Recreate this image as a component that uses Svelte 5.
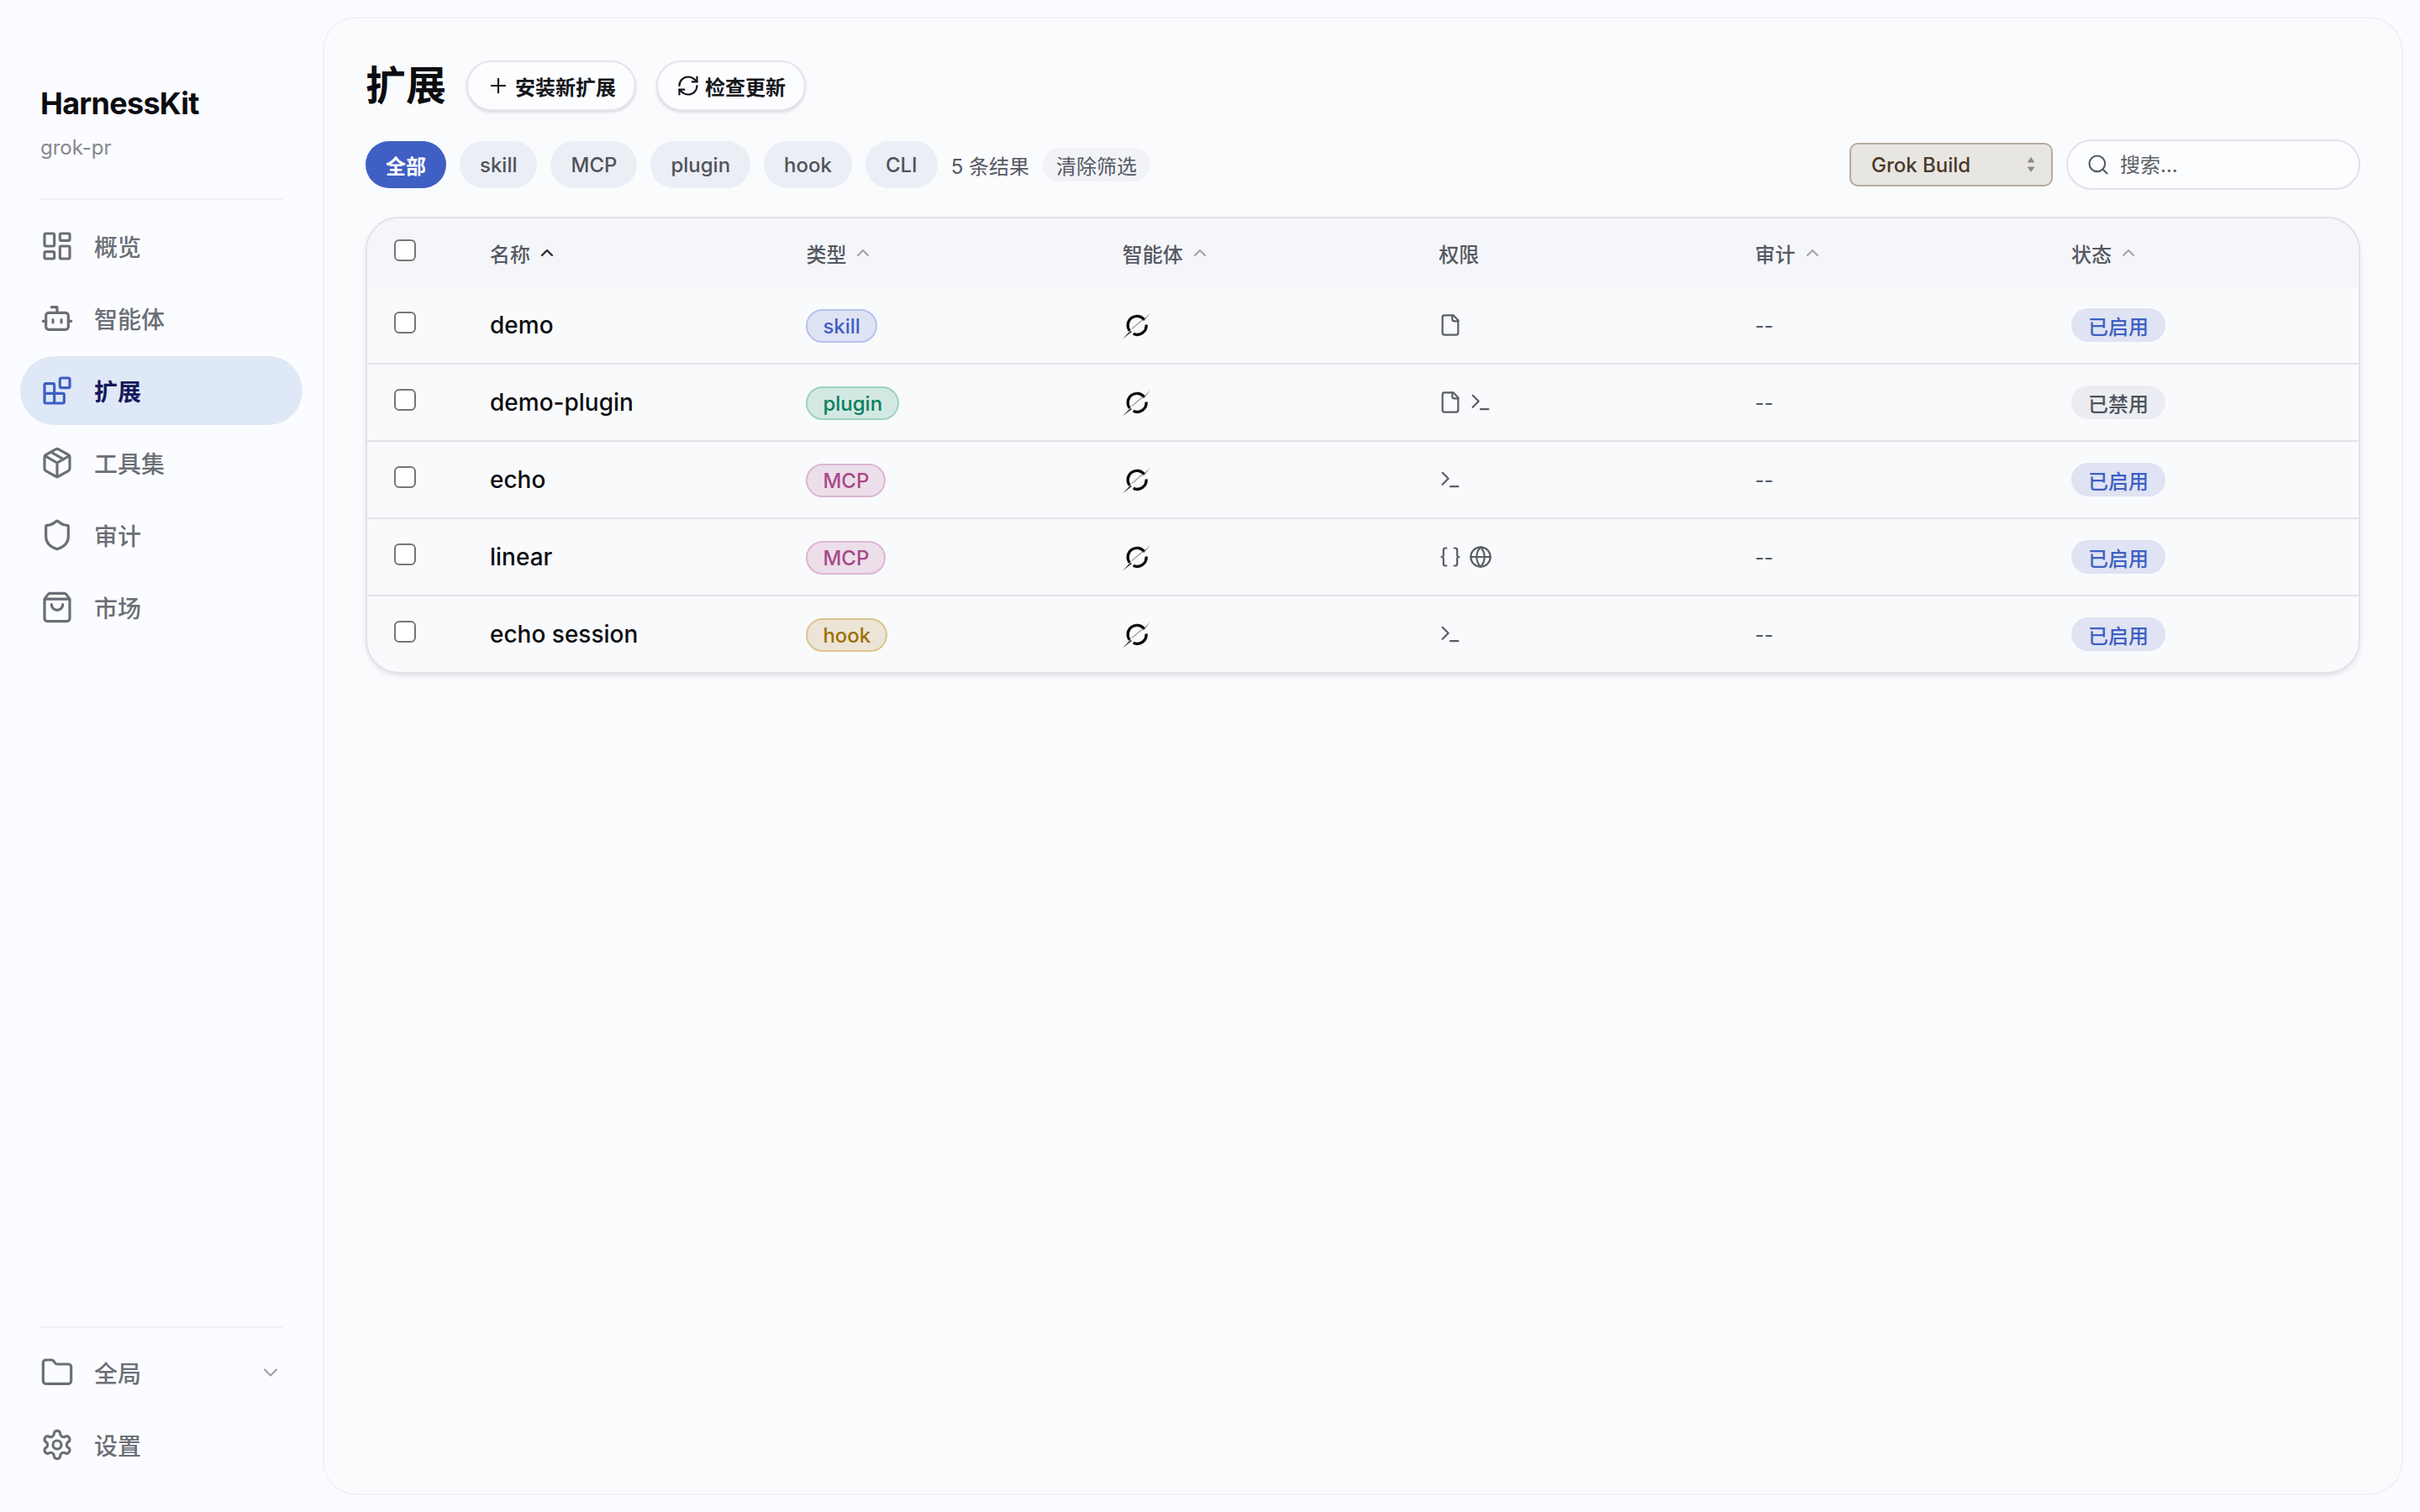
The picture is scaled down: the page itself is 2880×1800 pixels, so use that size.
<script>
  const icons = {
    dash: '<rect width="7" height="9" x="3" y="3" rx="1"/><rect width="7" height="5" x="14" y="3" rx="1"/><rect width="7" height="9" x="14" y="12" rx="1"/><rect width="7" height="5" x="3" y="16" rx="1"/>',
    bot: '<path d="M12 8V4H8"/><rect width="16" height="12" x="4" y="8" rx="2"/><path d="M2 14h2"/><path d="M20 14h2"/><path d="M15 13v2"/><path d="M9 13v2"/>',
    blocks: '<rect width="7" height="7" x="14" y="3" rx="1"/><path d="M10 21V8a1 1 0 0 0-1-1H4a1 1 0 0 0-1 1v12a1 1 0 0 0 1 1h12a1 1 0 0 0 1-1v-5a1 1 0 0 0-1-1H3"/>',
    pkg: '<path d="M11 21.73a2 2 0 0 0 2 0l7-4A2 2 0 0 0 21 16V8a2 2 0 0 0-1-1.73l-7-4a2 2 0 0 0-2 0l-7 4A2 2 0 0 0 3 8v8a2 2 0 0 0 1 1.73z"/><path d="M12 22V12"/><polyline points="3.29 7 12 12 20.71 7"/><path d="m7.5 4.27 9 5.15"/>',
    shield: '<path d="M20 13c0 5-3.5 7.5-7.66 8.95a1 1 0 0 1-.67-.01C7.5 20.5 4 18 4 13V6a1 1 0 0 1 1-1c2 0 4.5-1.2 6.24-2.72a1.17 1.17 0 0 1 1.52 0C14.51 3.81 17 5 19 5a1 1 0 0 1 1 1z"/>',
    bag: '<path d="M16 10a4 4 0 0 1-8 0"/><path d="M3.103 6.034h17.794"/><path d="M3.4 5.467a2 2 0 0 0-.4 1.2V20a2 2 0 0 0 2 2h14a2 2 0 0 0 2-2V6.667a2 2 0 0 0-.4-1.2l-2.1-2.8A2 2 0 0 0 17 2H7a2 2 0 0 0-1.6.8z"/>',
    folder: '<path d="M20 20a2 2 0 0 0 2-2V8a2 2 0 0 0-2-2h-7.9a2 2 0 0 1-1.69-.9L9.6 3.9A2 2 0 0 0 7.93 3H4a2 2 0 0 0-2 2v13a2 2 0 0 0 2 2Z"/>',
    gear: '<path d="M12.22 2h-.44a2 2 0 0 0-2 2v.18a2 2 0 0 1-1 1.73l-.43.25a2 2 0 0 1-2 0l-.15-.08a2 2 0 0 0-2.73.73l-.22.38a2 2 0 0 0 .73 2.73l.15.1a2 2 0 0 1 1 1.72v.51a2 2 0 0 1-1 1.74l-.15.09a2 2 0 0 0-.73 2.73l.22.38a2 2 0 0 0 2.73.73l.15-.08a2 2 0 0 1 2 0l.43.25a2 2 0 0 1 1 1.73V20a2 2 0 0 0 2 2h.44a2 2 0 0 0 2-2v-.18a2 2 0 0 1 1-1.73l.43-.25a2 2 0 0 1 2 0l.15.08a2 2 0 0 0 2.73-.73l.22-.39a2 2 0 0 0-.73-2.73l-.15-.08a2 2 0 0 1-1-1.74v-.5a2 2 0 0 1 1-1.74l.15-.09a2 2 0 0 0 .73-2.73l-.22-.38a2 2 0 0 0-2.73-.73l-.15.08a2 2 0 0 1-2 0l-.43-.25a2 2 0 0 1-1-1.73V4a2 2 0 0 0-2-2z"/><circle cx="12" cy="12" r="3"/>',
    file: '<path d="M15 2H6a2 2 0 0 0-2 2v16a2 2 0 0 0 2 2h12a2 2 0 0 0 2-2V7Z"/><path d="M14 2v4a2 2 0 0 0 2 2h4"/>',
    term: '<polyline points="4 17 10 11 4 5"/><line x1="12" x2="20" y1="19" y2="19"/>',
    braces: '<path d="M8 3H7a2 2 0 0 0-2 2v5a2 2 0 0 1-2 2 2 2 0 0 1 2 2v5c0 1.1.9 2 2 2h1"/><path d="M16 21h1a2 2 0 0 0 2-2v-5c0-1.1.9-2 2-2a2 2 0 0 1-2-2V5a2 2 0 0 0-2-2h-1"/>',
    globe: '<circle cx="12" cy="12" r="10"/><path d="M12 2a14.5 14.5 0 0 0 0 20 14.5 14.5 0 0 0 0-20"/><path d="M2 12h20"/>',
    plus: '<path d="M5 12h14"/><path d="M12 5v14"/>',
    refresh: '<path d="M3 12a9 9 0 0 1 9-9 9.75 9.75 0 0 1 6.74 2.74L21 8"/><path d="M21 3v5h-5"/><path d="M21 12a9 9 0 0 1-9 9 9.75 9.75 0 0 1-6.74-2.74L3 16"/><path d="M8 16H3v5"/>',
    up: '<path d="m18 15-6-6-6 6"/>',
    down: '<path d="m6 9 6 6 6-6"/>',
    search: '<path d="m21 21-4.34-4.34"/><circle cx="11" cy="11" r="8"/>'
  };
  const nav = [
    { label: '概览', icon: 'dash' },
    { label: '智能体', icon: 'bot' },
    { label: '扩展', icon: 'blocks', active: true },
    { label: '工具集', icon: 'pkg' },
    { label: '审计', icon: 'shield' },
    { label: '市场', icon: 'bag' }
  ];
  const filters = ['全部', 'skill', 'MCP', 'plugin', 'hook', 'CLI'];
  const columns = [
    { label: '名称', sort: 'active' },
    { label: '类型', sort: 'idle' },
    { label: '智能体', sort: 'idle' },
    { label: '权限' },
    { label: '审计', sort: 'idle' },
    { label: '状态', sort: 'idle' }
  ];
  const rows = [
    { name: 'demo', type: 'skill', perms: ['file'], on: true },
    { name: 'demo-plugin', type: 'plugin', perms: ['file', 'term'], on: false },
    { name: 'echo', type: 'MCP', perms: ['term'], on: true },
    { name: 'linear', type: 'MCP', perms: ['braces', 'globe'], on: true },
    { name: 'echo session', type: 'hook', perms: ['term'], on: true }
  ];
</script>

{#snippet icon(name, cls)}
  <svg class={cls} viewBox="0 0 24 24" fill="none" stroke="currentColor" stroke-linecap="round" stroke-linejoin="round">{@html icons[name]}</svg>
{/snippet}

<div class="app">
  <aside class="side">
    <div class="brand">
      <div class="logo">HarnessKit</div>
      <div class="project">grok-pr</div>
    </div>
    <div class="rule"></div>
    <nav class="nav">
      {#each nav as item}
        <div class="item" class:active={item.active}>
          {@render icon(item.icon, 'nav-ico')}
          <span>{item.label}</span>
        </div>
      {/each}
    </nav>
    <div class="foot">
      <div class="rule"></div>
      <div class="nav foot-nav">
        <div class="item">
          {@render icon('folder', 'nav-ico')}
          <span class="grow">全局</span>
          {@render icon('down', 'foot-chev')}
        </div>
        <div class="item">
          {@render icon('gear', 'nav-ico')}
          <span>设置</span>
        </div>
      </div>
    </div>
  </aside>

  <main class="panel">
    <header class="head">
      <h1>扩展</h1>
      <button class="btn">{@render icon('plus', 'btn-ico')}安装新扩展</button>
      <button class="btn">{@render icon('refresh', 'btn-ico')}检查更新</button>
    </header>

    <div class="filters">
      {#each filters as f, i}
        <span class="chip" class:on={i === 0}>{f}</span>
      {/each}
      <span class="count">5 条结果</span>
      <span class="clear">清除筛选</span>
      <div class="select">
        <span>Grok Build</span>
        <svg class="updown" viewBox="0 0 12 20"><path d="M6 1 10.5 7.5H1.5Z"/><path d="M6 19 1.5 12.5H10.5Z"/></svg>
      </div>
      <div class="search">
        {@render icon('search', 'search-ico')}
        <input placeholder="搜索..." />
      </div>
    </div>

    <section class="table">
      <div class="row thead">
        <div class="check"><input type="checkbox" /></div>
        {#each columns as c}
          <div class="th">
            <span>{c.label}</span>
            {#if c.sort}{@render icon('up', c.sort === 'active' ? 'sort sort-on' : 'sort')}{/if}
          </div>
        {/each}
      </div>
      {#each rows as r}
        <div class="row tr">
          <div class="check"><input type="checkbox" /></div>
          <div class="cell name">{r.name}</div>
          <div class="cell"><span class="tag {r.type}">{r.type}</span></div>
          <div class="cell">
            <svg class="grok" viewBox="0 0 33 33" fill="none">
              <path d="M25.6 9.6A10.8 10.8 0 0 0 8.4 22.7" stroke="#0b0b0d" stroke-width="3.3"/>
              <path d="M12.7 26.3A10.8 10.8 0 0 0 28.1 15.5" stroke="#0b0b0d" stroke-width="3.3"/>
              <path d="M33 1.2 24.5 12 25.4 9.6Z" fill="#222"/>
              <path d="M23.5 10 11 20.5" stroke="#9a9a9e" stroke-width="1.2"/>
              <path d="M0 32.4 9.4 22.4 11 24Z" fill="#333"/>
            </svg>
          </div>
          <div class="cell perms">
            {#each r.perms as p}{@render icon(p, 'perm')}{/each}
          </div>
          <div class="cell dash">--</div>
          <div class="cell"><span class="status" class:off={!r.on}>{r.on ? '已启用' : '已禁用'}</span></div>
        </div>
      {/each}
    </section>
  </main>
</div>

<style>
  :global(body) {
    margin: 0;
    background: #fbfcff;
    font-family: Inter, "Noto Sans CJK SC", sans-serif;
  }
  .app {
    display: flex;
    height: 1800px;
    width: 2880px;
  }
  .side {
    width: 384px;
    flex: none;
    display: flex;
    flex-direction: column;
    box-sizing: border-box;
    padding-bottom: 39px;
  }
  .brand {
    padding: 102px 48px 0;
    height: 134px;
  }
  .logo {
    font-size: 36px;
    font-weight: 700;
    line-height: 42px;
    letter-spacing: -0.72px;
    color: #0b0c10;
  }
  .project {
    margin-top: 16px;
    font-size: 24px;
    line-height: 32px;
    color: #85878e;
  }
  .rule {
    height: 2px;
    margin: 0 48px;
    background: #eff0f4;
  }
  .nav {
    display: flex;
    flex-direction: column;
    gap: 4px;
    padding: 14px 24px 0;
  }
  .item {
    height: 82px;
    display: flex;
    align-items: center;
    gap: 24px;
    padding: 0 24px;
    border-radius: 41px;
    font-size: 28px;
    font-weight: 500;
    color: #6b6e76;
  }
  .item.active {
    background: #dfe8f6;
    color: #15185a;
    font-weight: 700;
  }
  .item.active :global(.nav-ico) {
    color: #3f5fc4;
  }
  :global(.nav-ico) {
    width: 40px;
    height: 40px;
    flex: none;
    stroke-width: 1.9;
  }
  .foot {
    margin-top: auto;
  }
  .foot-nav {
    padding-top: 12px;
  }
  .grow {
    flex: 1;
  }
  :global(.foot-chev) {
    width: 28px;
    height: 28px;
    color: #9b9da3;
    stroke-width: 1.8;
  }

  .panel {
    flex: 1;
    margin: 20px 20px 20px 0;
    box-sizing: border-box;
    border: 2px solid #f1f2f5;
    border-radius: 40px;
    background: #fafbfd;
    padding: 48px 49px;
    display: flex;
    flex-direction: column;
    gap: 32px;
  }
  .head {
    display: flex;
    align-items: center;
    gap: 24px;
    height: 64px;
  }
  h1 {
    margin: 0;
    font-size: 48px;
    line-height: 64px;
    font-weight: 700;
    color: #0b0c10;
  }
  .btn {
    height: 60px;
    box-sizing: border-box;
    display: flex;
    align-items: center;
    gap: 6px;
    padding: 0 22px;
    border: 2px solid #e4e4ea;
    border-radius: 30px;
    background: #fbfdff;
    box-shadow: 0 2px 3px rgba(80, 80, 120, 0.18);
    font: 600 24px Inter, "Noto Sans CJK SC", sans-serif;
    color: #15161a;
  }
  :global(.btn-ico) {
    width: 28px;
    height: 28px;
    stroke-width: 1.9;
  }

  .filters {
    display: flex;
    align-items: center;
    height: 60px;
    gap: 16px;
    font-size: 24px;
    font-weight: 500;
  }
  .chip {
    height: 56px;
    display: flex;
    align-items: center;
    padding: 0 24px;
    border-radius: 28px;
    background: #eceef5;
    color: #4f535b;
  }
  .chip.on {
    background: #3f5fc4;
    color: #fff;
    font-weight: 600;
  }
  .count {
    color: #555962;
    font-weight: 400;
  }
  .clear {
    height: 40px;
    display: flex;
    align-items: center;
    padding: 0 16px;
    border-radius: 20px;
    background: #f2f3f7;
    color: #555962;
    font-weight: 400;
  }
  .select {
    margin-left: auto;
    width: 242px;
    height: 52px;
    box-sizing: border-box;
    display: flex;
    align-items: center;
    justify-content: space-between;
    padding: 0 18px 0 24px;
    background: #e8e6e3;
    border: 2px solid #b5aca0;
    border-radius: 10px;
    color: #4a3a28;
  }
  .updown {
    width: 12px;
    height: 20px;
    fill: #8d8a86;
  }
  .search {
    width: 350px;
    height: 60px;
    box-sizing: border-box;
    display: flex;
    align-items: center;
    gap: 12px;
    padding: 0 22px;
    border: 2px solid #e1e2e7;
    border-radius: 30px;
    background: #fbfdff;
  }
  :global(.search-ico) {
    width: 28px;
    height: 28px;
    flex: none;
    color: #555962;
    stroke-width: 1.8;
  }
  .search input {
    flex: 1;
    min-width: 0;
    border: 0;
    outline: 0;
    padding: 0;
    background: transparent;
    font: 400 24px Inter, "Noto Sans CJK SC", sans-serif;
  }
  .search input::placeholder {
    color: #5f6269;
    opacity: 1;
  }

  .table {
    border: 2px solid #e2e3e8;
    border-radius: 40px;
    overflow: hidden;
    background: #f9fafc;
    box-shadow: 0 3px 5px rgba(80, 80, 130, 0.12);
  }
  .row {
    display: grid;
    grid-template-columns: 122px repeat(5, 376.4px) 1fr;
    align-items: center;
  }
  .thead {
    height: 82px;
    background: #f5f6fa;
  }
  .tr {
    height: 92px;
    box-sizing: border-box;
    border-top: 0;
    border-bottom: 2px solid #e2e3e8;
  }
  .tr:last-child {
    border-bottom: 0;
    height: 90px;
  }
  .check {
    padding-left: 32px;
    height: 26px;
    margin-top: -6px;
  }
  .check input {
    appearance: none;
    display: block;
    width: 26px;
    height: 26px;
    margin: 0;
    box-sizing: border-box;
    border: 2px solid #767676;
    border-radius: 6px;
    background: #fff;
  }
  .th {
    padding-left: 24px;
    display: flex;
    align-items: center;
    gap: 8px;
    font-size: 24px;
    font-weight: 500;
    color: #555962;
  }
  :global(.sort) {
    width: 24px;
    height: 24px;
    color: #a0a2a8;
    stroke-width: 2;
  }
  :global(.sort-on) {
    color: #2b2d33;
    stroke-width: 2.4;
  }
  .cell {
    padding-left: 24px;
    display: flex;
    align-items: center;
  }
  .name {
    font-size: 28px;
    font-weight: 500;
    color: #0d0e12;
  }
  .tag {
    height: 40px;
    box-sizing: border-box;
    display: flex;
    align-items: center;
    padding: 0 18px;
    margin-top: 2px;
    border: 2px solid;
    border-radius: 20px;
    font-size: 24px;
    font-weight: 500;
  }
  .skill { background: #dfe4f4; border-color: #b5c3eb; color: #3f5fc4; }
  .plugin { background: #d3e8e3; border-color: #a0d2c2; color: #0a7f5c; }
  .MCP { background: #ecdfe9; border-color: #dcb7d2; color: #a8488a; }
  .hook { background: #ece4d6; border-color: #dcc48e; color: #a06f00; }
  .grok {
    width: 33px;
    height: 33px;
    margin-top: 1px;
  }
  .perms {
    gap: 8px;
  }
  :global(.perm) {
    width: 28px;
    height: 28px;
    color: #5a5d66;
    stroke-width: 1.9;
  }
  .dash {
    font-size: 24px;
    color: #555962;
  }
  .status {
    height: 40px;
    display: flex;
    align-items: center;
    padding: 0 20px;
    border-radius: 20px;
    background: #dfe3f3;
    color: #3f5fc4;
    font-size: 24px;
    font-weight: 500;
  }
  .status.off {
    background: #ebedf3;
    color: #4f535b;
  }
</style>
